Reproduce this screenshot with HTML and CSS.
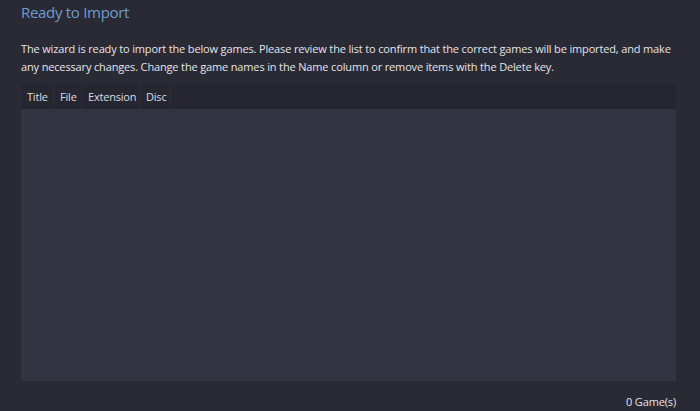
FILE: index.html
```html
<!DOCTYPE html>
<html>
<head>
<meta charset="utf-8">
<link rel="stylesheet" href="styles.css">
</head>
<body>
<div class="page">
  <h1 class="title">Ready to Import</h1>
  <p class="intro">The wizard is ready to import the below games. Please review the list to confirm that the correct games will be imported, and make any necessary changes. Change the game names in the Name column or remove items with the Delete key.</p>
  <div class="grid">
    <div class="grid-head">
      <div class="col col-title">Title</div>
      <div class="col col-file">File</div>
      <div class="col col-ext">Extension</div>
      <div class="col col-disc">Disc</div>
    </div>
    <div class="grid-body"></div>
  </div>
  <div class="footer">0 Game(s)</div>
</div>
</body>
</html>
```
FILE: styles.css
```css
html, body {
  margin: 0;
  padding: 0;
  background: #2a2a35;
  width: 700px;
  height: 411px;
  overflow: hidden;
}
.page {
  display: flex;
  flex-direction: column;
  height: 411px;
  padding: 0 24px 0 21px;
  box-sizing: border-box;
  font-family: "Open Sans", "Noto Sans", sans-serif;
  color: #e6e6ea;
}
.title {
  margin: 1px 0 0 0;
  font-size: 15px;
  font-weight: 400;
  line-height: 22px;
  letter-spacing: -0.3px;
  color: #6f9bcf;
}
.intro {
  margin: 17px 0 0 0;
  font-size: 11px;
  line-height: 18px;
  letter-spacing: -0.15px;
  color: #e4e4e8;
}
.grid {
  margin-top: 8px;
  display: flex;
  flex-direction: column;
  height: 298px;
}
.grid-head {
  display: flex;
  height: 25px;
  background: #262631;
}
.col {
  font-size: 11px;
  line-height: 25px;
  letter-spacing: -0.2px;
  padding: 0 6px;
  color: #dcdce2;
  border-right: 1px solid #2d2d38;
  box-sizing: border-box;
  white-space: nowrap;
}
.col-title { width: 33px; }
.col-file { width: 28px; }
.col-ext { width: 58px; }
.col-disc { width: 31px; }
.grid-body {
  flex: 1;
  background: #333441;
}
.footer {
  margin-top: 12px;
  text-align: right;
  font-size: 11px;
  line-height: 18px;
  letter-spacing: -0.15px;
  color: #e4e4e8;
}
```
